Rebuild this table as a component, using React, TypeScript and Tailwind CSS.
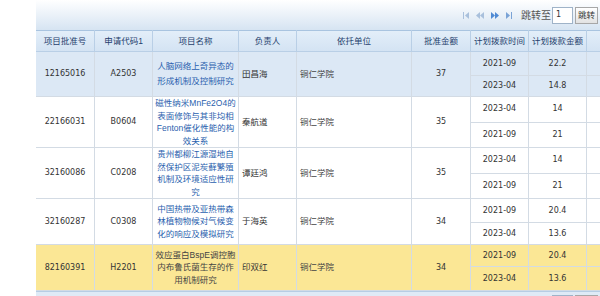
import React from 'react'

type Plan = { date: string; amt: string; h: number }
type Row = {
  no: string
  code: string
  name: string[]
  person: string
  amount: string
  plans: Plan[]
  tone: 'blue' | 'white' | 'yellow'
}

const ROWS: Row[] = [
  {
    no: '12165016',
    code: 'A2503',
    name: ['人脑网络上奇异态的', '形成机制及控制研究'],
    person: '田昌海',
    amount: '37',
    plans: [
      { date: '2021-09', amt: '22.2', h: 24 },
      { date: '2023-04', amt: '14.8', h: 21 },
    ],
    tone: 'blue',
  },
  {
    no: '22166031',
    code: 'B0604',
    name: ['磁性纳米MnFe2O4的', '表面修饰与其非均相', 'Fenton催化性能的构', '效关系'],
    person: '秦航道',
    amount: '35',
    plans: [
      { date: '2023-04', amt: '14', h: 25 },
      { date: '2021-09', amt: '21', h: 25 },
    ],
    tone: 'white',
  },
  {
    no: '32160086',
    code: 'C0208',
    name: ['贵州都柳江源湿地自', '然保护区泥炭藓繁殖', '机制及环境适应性研', '究'],
    person: '谭廷鸿',
    amount: '35',
    plans: [
      { date: '2023-04', amt: '14', h: 25 },
      { date: '2021-09', amt: '21', h: 25 },
    ],
    tone: 'white',
  },
  {
    no: '32160287',
    code: 'C0308',
    name: ['中国热带及亚热带森', '林植物物候对气候变', '化的响应及模拟研究'],
    person: '于海英',
    amount: '34',
    plans: [
      { date: '2021-09', amt: '20.4', h: 24 },
      { date: '2023-04', amt: '13.6', h: 22 },
    ],
    tone: 'white',
  },
  {
    no: '82160391',
    code: 'H2201',
    name: ['效应蛋白BspE调控胞', '内布鲁氏菌生存的作', '用机制研究'],
    person: '印双红',
    amount: '34',
    plans: [
      { date: '2021-09', amt: '20.4', h: 22 },
      { date: '2023-04', amt: '13.6', h: 24 },
    ],
    tone: 'yellow',
  },
]

const HEADS = ['项目批准号', '申请代码1', '项目名称', '负责人', '依托单位', '批准金额', '计划拨款时间', '计划拨款金额', '']
const WIDTHS = [59, 58, 86, 58, 115, 59, 58, 58, 40]

const num = "font-['DejaVu_Sans',sans-serif] text-[8px] text-[#333]"
const cjk = "font-['Liberation_Sans','Noto_Sans_CJK_SC',sans-serif] text-[8.5px]"
const td = 'border border-[#d3dbe4] p-0 align-middle'

function Tri({ dir, bar, dbl, color }: { dir: 'l' | 'r'; bar?: boolean; dbl?: boolean; color: string }) {
  const t = dir === 'l' ? 'M5 0 L1 3.5 L5 7 Z' : 'M1 0 L5 3.5 L1 7 Z'
  const t2 = dir === 'l' ? 'M9 0 L5 3.5 L9 7 Z' : 'M5 0 L9 3.5 L5 7 Z'
  return (
    <svg width={dbl ? 10 : 7} height={7} viewBox={dbl ? '0 0 10 7' : '0 0 7 7'} fill={color}>
      {dir === 'l' && bar && <rect x={0} y={0} width={1} height={7} />}
      <path d={dir === 'l' && bar ? 'M6 0 L2 3.5 L6 7 Z' : t} />
      {dbl && <path d={t2} />}
      {dir === 'r' && bar && <rect x={6} y={0} width={1} height={7} />}
    </svg>
  )
}

function Pager() {
  return (
    <div className="flex items-center">
      <div className="flex items-center gap-[5px] mr-[9px]">
        <Tri dir="l" bar color="#a9c0dc" />
        <Tri dir="l" dbl color="#a9c0dc" />
        <Tri dir="r" dbl color="#4f8ad4" />
        <Tri dir="r" bar color="#7aa3d6" />
      </div>
      <span className={`${cjk} text-[10px] text-[#555] mr-[1px]`}>跳转至</span>
      <div className={`w-[21px] h-[17px] bg-white border border-[#9fb3c8] flex items-center pl-[3px] ${num}`}>1</div>
      <div className={`ml-[2px] w-[23px] h-[17px] border border-[#a7a7a7] bg-gradient-to-b from-white to-[#e2e2e2] flex items-center justify-center ${cjk} text-[#333]`}>
        跳转
      </div>
    </div>
  )
}

export default function App() {
  const bg = (t: Row['tone']) => (t === 'blue' ? 'bg-[#dce8f5]' : t === 'yellow' ? 'bg-[#fbe795]' : 'bg-white')
  return (
    <div className="w-[600px] h-[296px] overflow-hidden bg-white flex">
      <div className="w-[36px] shrink-0" />
      <div className="flex-1 overflow-hidden flex flex-col">
        <div className="h-[30px] shrink-0 bg-gradient-to-b from-white to-[#d6e4f2] flex items-center justify-end pr-[2px]">
          <Pager />
        </div>
        <table className="table-fixed border-collapse w-[591px] -ml-px">
          <colgroup>
            {WIDTHS.map((w, i) => (
              <col key={i} style={{ width: w }} />
            ))}
          </colgroup>
          <thead>
            <tr className="h-[21px] bg-gradient-to-b from-[#e3eef9] to-[#d3e3f3]">
              {HEADS.map((h, i) => (
                <th key={i} className={`border border-[#b9cfe6] border-t-[#a9c4e0] font-normal text-[#1f3f6d] ${cjk} p-0`}>
                  {h}
                </th>
              ))}
            </tr>
          </thead>
          <tbody>
            {ROWS.map((r) =>
              r.plans.map((p, pi) => (
                <tr key={r.no + pi} className={bg(r.tone)} style={{ height: p.h }}>
                  {pi === 0 && (
                    <>
                      <td rowSpan={2} className={`${td} text-center ${num}`}>{r.no}</td>
                      <td rowSpan={2} className={`${td} text-center ${num}`}>{r.code}</td>
                      <td
                        rowSpan={2}
                        className={`${td} text-center ${cjk} ${r.name.length === 2 ? 'leading-[15px]' : 'leading-[12.5px]'} ${r.tone === 'yellow' ? 'text-[#444]' : 'text-[#2a5fae]'}`}
                      >
                        {r.name.map((l, i) => (
                          <div key={i} className="whitespace-nowrap">{l}</div>
                        ))}
                      </td>
                      <td rowSpan={2} className={`${td} pl-[3px] ${cjk} text-[#333]`}>{r.person}</td>
                      <td rowSpan={2} className={`${td} pl-[3px] ${cjk} text-[#444]`}>铜仁学院</td>
                      <td rowSpan={2} className={`${td} text-center ${num}`}>{r.amount}</td>
                    </>
                  )}
                  <td className={`${td} text-center ${num}`}>{p.date}</td>
                  <td className={`${td} text-center ${num}`}>{p.amt}</td>
                  <td className={td} />
                </tr>
              ))
            )}
          </tbody>
        </table>
        <div className="h-[30px] shrink-0 bg-[#dfeaf6] border-t border-[#b7cde4] flex items-start justify-between pt-[3px] pr-[2px]">
          <div className="flex items-center gap-[6px] pl-[4px] pt-[3px]">
            <div className="w-[8px] h-[8px] rounded-[2px] bg-[#8fb0d6]" />
            <div className="w-[9px] h-[8px] bg-[#9db9da]" />
            <span className={`${cjk} text-[#555] ml-[6px]`}>每页显示 10 条，共 5 条记录</span>
          </div>
          <Pager />
        </div>
      </div>
    </div>
  )
}
